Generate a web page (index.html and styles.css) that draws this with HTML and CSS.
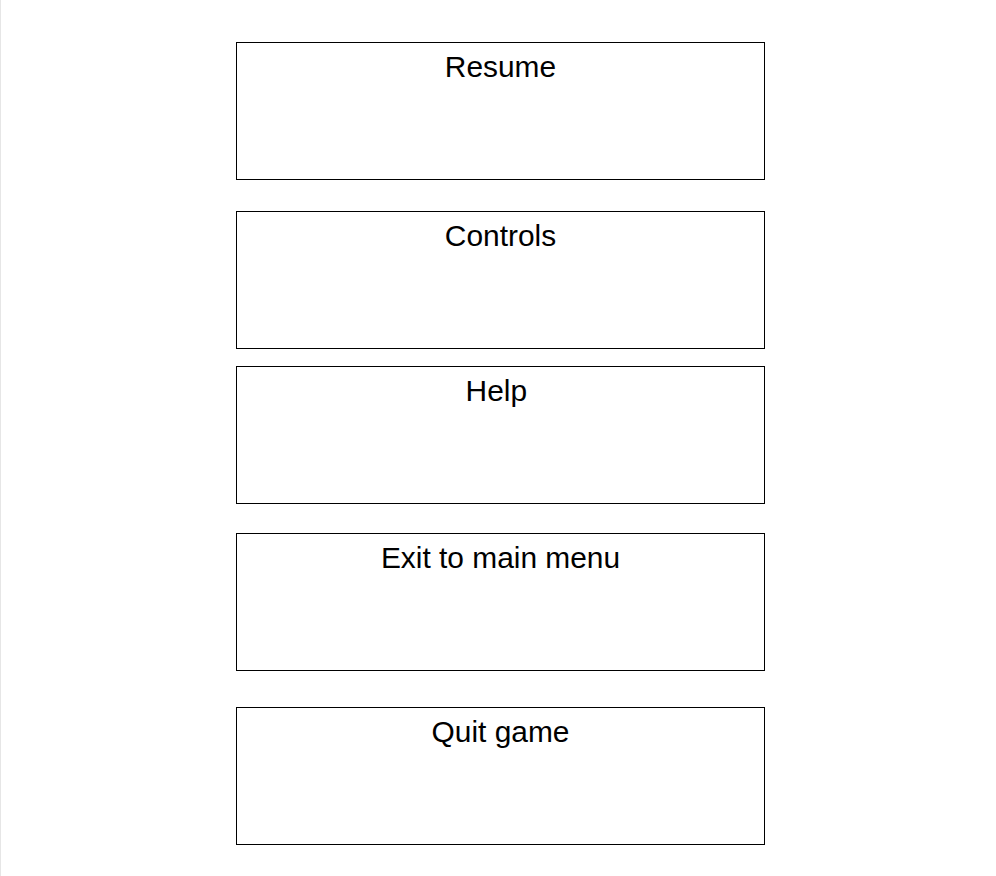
FILE: index.html
```html
<!DOCTYPE html>
<html>
<head>
<meta charset="utf-8">
<link rel="stylesheet" href="styles.css">
</head>
<body>
<div class="page">
  <nav class="menu">
    <div class="menu-item">Resume</div>
    <div class="menu-item gap-31">Controls</div>
    <div class="menu-item gap-17">Help&nbsp;</div>
    <div class="menu-item gap-29">Exit to main menu</div>
    <div class="menu-item gap-36">Quit game</div>
  </nav>
</div>
</body>
</html>
```
FILE: styles.css
```css
html, body {
  margin: 0;
  padding: 0;
  background: #ffffff;
}
.page {
  border-left: 1px solid #e6e6e6;
  min-height: 876px;
  box-sizing: border-box;
  padding-top: 42px;
  padding-left: 4px;
}
.menu {
  display: flex;
  flex-direction: column;
  align-items: center;
}
.menu-item {
  box-sizing: border-box;
  width: 529px;
  height: 138px;
  border: 1px solid #000000;
  text-align: center;
  font-family: "Liberation Sans", Arial, sans-serif;
  font-size: 29.9px;
  line-height: 1.15;
  color: #000000;
  padding-top: 7px;
}
.gap-31 { margin-top: 31px; }
.gap-17 { margin-top: 17px; }
.gap-29 { margin-top: 29px; }
.gap-36 { margin-top: 36px; }
```
